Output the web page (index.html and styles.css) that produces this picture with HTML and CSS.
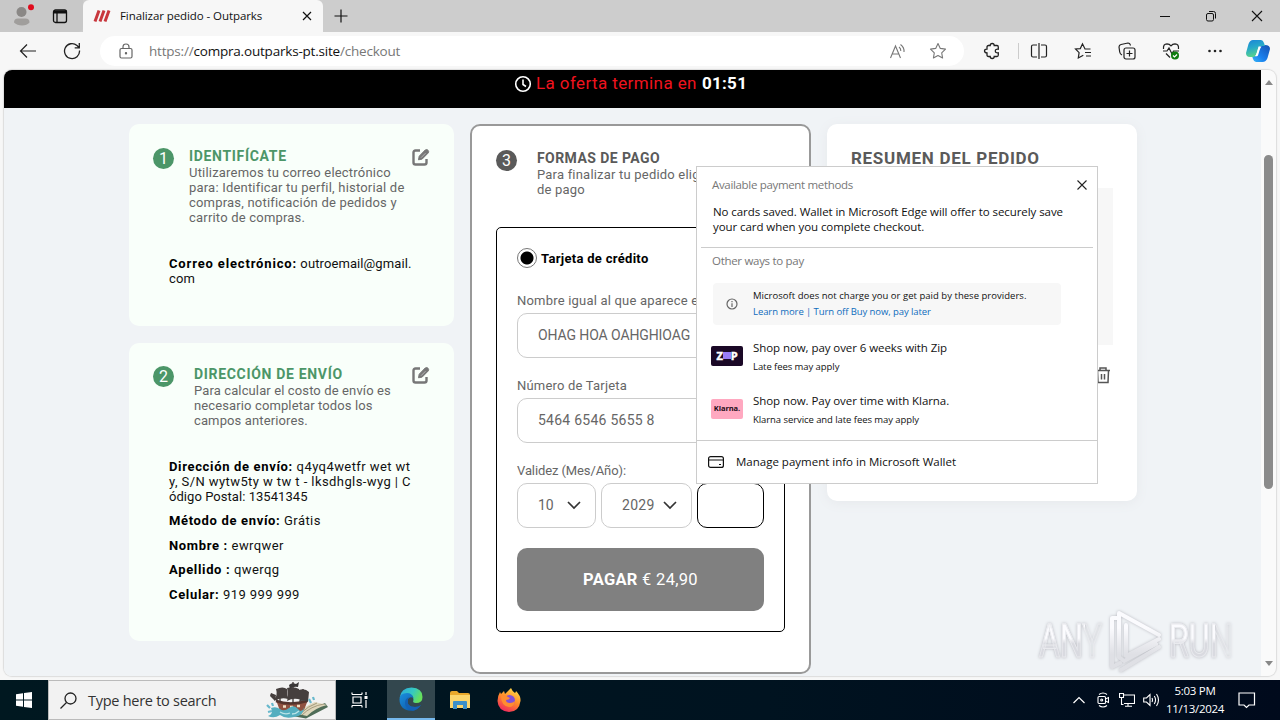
FILE: index.html
```html
<!doctype html>
<html lang="es">
<head>
    <meta charset="UTF-8">
    <title>Finalizar pedido - Outparks</title>
    <link rel="stylesheet" href="styles.css">
</head>
<body>
<div class="titlebar">
    <div class="title-left">
        <svg class="profile" width="22" height="22" viewBox="0 0 22 22">
            <circle cx="8.500" cy="8" r="5" fill="#8a8886"/>
            <path d="M1 18.500q0-4 4-4h7.500q4 0 4 4q-2.500 3-7.500 3t-8-3z" fill="#a09e9c"/>
            <circle cx="18" cy="3.200" r="3" fill="#e00b1c"/>
        </svg>
        <svg width="16" height="16" viewBox="0 0 16 16" fill="none" stroke="#111" stroke-width="1.300">
            <rect x="1.500" y="2" width="13" height="12.500" rx="2"/>
            <path d="M1.500 4h13" stroke-width="3"/><path d="M5 4v10"/>
        </svg>
    </div>
    <div class="tab">
        <svg width="18" height="14" viewBox="0 0 18 14" stroke="#c8373d" stroke-width="3"><path d="M2 12.500L6 1.500M7 12.500L11 1.500M12 12.500L16 1.500"/></svg>
        <span class="tab-title">Finalizar pedido - Outparks</span>
        <svg class="tab-close" width="10" height="10" viewBox="0 0 10 10" stroke="#111" stroke-width="1.200"><path d="M1 1l8 8M9 1l-8 8"/></svg>
    </div>
    <svg class="plus" width="14" height="14" viewBox="0 0 14 14" stroke="#111" stroke-width="1.200"><path d="M7 .5v13M.5 7h13"/></svg>
    <div class="win-btns">
        <svg width="12" height="12" viewBox="0 0 12 12" stroke="#111"><path d="M1 6.500h10"/></svg>
        <svg width="12" height="12" viewBox="0 0 12 12" fill="none" stroke="#111"><rect x="1.500" y="3.500" width="7" height="7.500" rx="1.500"/><path d="M4 1.500h4.500q2 0 2 2v5"/></svg>
        <svg width="12" height="12" viewBox="0 0 12 12" stroke="#111" stroke-width="1.100"><path d="M1 1l10 10M11 1L1 11"/></svg>
    </div>
</div>

<div class="toolbar">
    <svg width="18" height="16" viewBox="0 0 18 16" fill="none" stroke="#222" stroke-width="1.200"><path d="M17 8H1.500M8 1.500L1.500 8L8 14.500"/></svg>
    <svg class="reload" width="18" height="18" viewBox="0 0 18 18" fill="none" stroke="#222" stroke-width="1.300"><path d="M16.500 8.500a7.500 7.500 0 1 1-2.500-5l2 2M16.300 1v4.800h-4.600"/></svg>
    <div class="address">
        <svg width="14" height="16" viewBox="0 0 14 16" fill="none" stroke="#666" stroke-width="1.200"><rect x="1" y="5.500" width="12" height="9.500" rx="1.500"/><path d="M4 5.500V4q0-3 3-3t3 3v1.500"/><circle cx="7" cy="10.200" r=".6" fill="#666"/></svg>
        <span class="url">https://<b>compra.outparks-pt.site</b>/checkout</span>
        <svg class="read" width="18" height="16" viewBox="0 0 18 16" fill="none" stroke="#777" stroke-width="1.100"><path d="M1.500 15L6.500 3L11.500 15M3.200 11h6.600M10 4q2 1.500 1.800 4M11.500 1.500q4 3 3.500 7.500"/></svg>
        <svg width="18" height="18" viewBox="0 0 18 18" fill="none" stroke="#777" stroke-width="1.100" stroke-linejoin="round"><path d="M9 1.500l2.300 4.900 5.200.7-3.800 3.700.9 5.200L9 13.500 4.400 16l.9-5.200L1.500 7.100l5.200-.7z"/></svg>
    </div>
    <div class="tools">
        <svg width="18" height="18" viewBox="0 0 18 18" fill="none" stroke="#222" stroke-width="1.300"><path d="M5 3.500h2.200q0-2 2-2t2 2H14q1.300 0 1.300 1.500v2.200q-3-.3-3 1.800t3 1.800V13q0 1.500-1.300 1.500h-2.800q0 2-2 2t-2-2H5.500Q4 14.500 4 13v-2.200q-2.500 0-2.500-1.800T4 7.200V5q0-1.500 1.500-1.500"/></svg>
        <i class="sep"></i>
        <svg width="18" height="18" viewBox="0 0 18 18" fill="none" stroke="#222" stroke-width="1.200"><path d="M7 3H3q-1.500 0-1.500 1.500v9Q1.500 15 3 15h4M11 3h4q1.500 0 1.500 1.500v9q0 1.500-1.500 1.500h-4M9 1v16"/></svg>
        <svg width="18" height="18" viewBox="0 0 18 18" fill="none" stroke="#222" stroke-width="1.200"><path d="M16.500 7H11L8.500 1.800 6.300 6.600 1.500 7l3.600 3.700L4.300 16l5-2.800M11 10.500h6M12 14h5"/></svg>
        <svg width="18" height="18" viewBox="0 0 18 18" fill="none" stroke="#222" stroke-width="1.200"><rect x="6" y="6" width="11" height="11" rx="2"/><path d="M11.500 8.500v6M8.500 11.500h6M4 13Q2 12 1.700 10L1 5Q1 3 3 2.500L10 1q2 0 2.500 2.500"/></svg>
        <svg width="18" height="18" viewBox="0 0 18 18" fill="none" stroke="#222" stroke-width="1.200"><path d="M1.500 7Q1 2 5 1.800q2.500 0 4 2 1.500-2 4-2 4 .2 3.500 5.200M1 9h4l2-3 3 6 1.500-3H17M4 11.500l4 4"/><circle cx="13" cy="13.500" r="4" fill="#107c10" stroke="none"/><path d="M11 13.500l1.500 1.500 2.500-2.500" stroke="#fff"/></svg>
        <svg width="18" height="18" viewBox="0 0 18 18" fill="#222"><circle cx="3.500" cy="9" r="1.300"/><circle cx="9" cy="9" r="1.300"/><circle cx="14.500" cy="9" r="1.300"/></svg>
    </div>
    <svg class="copilot" width="24" height="24" viewBox="0 0 24 24">
        <defs>
            <linearGradient id="cp1" x1="0" y1="0" x2="0.300" y2="1"><stop offset="0" stop-color="#1a83d8"/><stop offset=".5" stop-color="#27a9c9"/><stop offset="1" stop-color="#58d38c"/></linearGradient>
            <linearGradient id="cp2" x1="1" y1="0" x2="0" y2="1"><stop offset="0" stop-color="#1650b0"/><stop offset=".6" stop-color="#1a80ee"/><stop offset="1" stop-color="#39b7f5"/></linearGradient>
        </defs>
        <path d="M14 6h5q5 0 5 4l-2.500 9q-1.500 4-5 4H10q-2 0-3-3l-1-3h5z" fill="url(#cp2)"/>
        <path d="M7 1h8q2 0 3 3l1 3h-4q-2 0-3 3l-2 6q-1 2-3 2H4q-4 0-4-4l2.500-9Q4 1 7 1z" fill="url(#cp1)"/>
        <path d="M12.500 7.500h3q-1 1-2 4l-1.200 4q-.5 1.500-1.300 1.800H9q1-1 2-4z" fill="#fff"/>
    </svg>
</div>

<div class="view">
    <div class="page">
        <div class="banner">
            <svg width="18" height="18" viewBox="0 0 18 18" fill="none" stroke="#fff" stroke-width="1.600"><circle cx="9" cy="9" r="7.300"/><path d="M9 4.500v5l3 2"/></svg>
            <span class="offer">La oferta termina en</span>
            <span class="timer">01:51</span>
        </div>
        <div class="columns">
            <div class="col-left">
                <div class="card done identify">
                    <div class="head">
                        <span class="step">1</span>
                        <div class="head-text">
                            <h2>IDENTIFÍCATE</h2>
                            <p>Utilizaremos tu correo electrónico<br>para: Identificar tu perfil, historial de<br>compras, notificación de pedidos y<br>carrito de compras.</p>
                        </div>
                        <svg class="edit" width="18" height="18" viewBox="0 0 18 18" fill="none" stroke="#777" stroke-width="2.400"><path d="M8 2.500H3.500q-2 0-2 2v10q0 2 2 2h9q2 0 2-2V11"/><path d="M6.500 11.800l.7-3.600 6-6.200q1.600-1 2.800.2t.2 2.800l-6 6.100z" fill="#777" stroke-width="1"/><path d="M9 9.700l4.500-4.500" stroke="#ccc" stroke-width=".7"/></svg>
                    </div>
                    <div class="data">
                        <p class="email"><b>Correo electrónico:</b> outroemail@gmail.<br>com</p>
                    </div>
                </div>
                <div class="card done shipping">
                    <div class="head">
                        <span class="step">2</span>
                        <div class="head-text">
                            <h2>DIRECCIÓN DE ENVÍO</h2>
                            <p>Para calcular el costo de envío es<br>necesario completar todos los<br>campos anteriores.</p>
                        </div>
                        <svg class="edit" width="18" height="18" viewBox="0 0 18 18" fill="none" stroke="#777" stroke-width="2.400"><path d="M8 2.500H3.500q-2 0-2 2v10q0 2 2 2h9q2 0 2-2V11"/><path d="M6.500 11.800l.7-3.600 6-6.200q1.600-1 2.800.2t.2 2.800l-6 6.100z" fill="#777" stroke-width="1"/><path d="M9 9.700l4.500-4.500" stroke="#ccc" stroke-width=".7"/></svg>
                    </div>
                    <div class="data">
                        <p><b>Dirección de envío:</b> q4yq4wetfr wet wt<br>y, S/N wytw5ty w tw t - lksdhgls-wyg | C<br><span class="postal">ódigo Postal: 13541345</span></p>
                        <p><b>Método de envío:</b> Grátis</p>
                        <p><b>Nombre :</b> ewrqwer</p>
                        <p><b>Apellido :</b> qwerqg</p>
                        <p><b>Celular:</b> 919 999 999</p>
                    </div>
                </div>
            </div>

            <div class="card payment">
                <div class="head">
                    <span class="step">3</span>
                    <div class="head-text">
                        <h2>FORMAS DE PAGO</h2>
                        <p>Para finalizar tu pedido elig<br>de pago</p>
                    </div>
                </div>
                <div class="method">
                    <div class="radio"><i></i><b>Tarjeta de crédito</b></div>
                    <label>Nombre igual al que aparece e</label>
                    <div class="input name">OHAG HOA OAHGHIOAG</div>
                    <label>Número de Tarjeta</label>
                    <div class="input number">5464 6546 5655 8</div>
                    <label class="expiry">Validez (Mes/Año):</label>
                    <div class="selects">
                        <div class="input month">10<svg width="14" height="9" viewBox="0 0 14 9" fill="none" stroke="#333" stroke-width="1.700"><path d="M1 1l6 6 6-6"/></svg></div>
                        <div class="input year">2029<svg width="14" height="9" viewBox="0 0 14 9" fill="none" stroke="#333" stroke-width="1.700"><path d="M1 1l6 6 6-6"/></svg></div>
                        <div class="input cvv"></div>
                    </div>
                    <div class="pay"><b>PAGAR</b>&nbsp;€ 24,90</div>
                </div>
            </div>

            <div class="card summary">
                <h2>RESUMEN DEL PEDIDO</h2>
                <div class="product"></div>
                <svg class="trash" width="14" height="18" viewBox="0 0 14 18" fill="none" stroke="#555" stroke-width="1.500"><path d="M0 4.500h14M4 4V2h6v2M1.500 5l.5 11.500h10L12.500 5M5.500 8v5.500M8.500 8v5.500"/></svg>
            </div>
        </div>
    </div>
    <div class="scroll">
        <i class="up"></i>
        <i class="thumb"></i>
        <i class="down"></i>
    </div>
</div>

<div class="taskbar">
    <div class="start"><svg width="16" height="16" viewBox="0 0 16 16" fill="#fff"><path d="M0 2.200L7 1.200V7.500H0zM8 1L16 0V7.500H8zM0 8.500H7V14.800L0 13.800zM8 8.500h8V16L8 15z"/></svg></div>
    <div class="search">
        <svg width="17" height="17" viewBox="0 0 17 17" fill="none" stroke="#222" stroke-width="1.300"><circle cx="10.500" cy="6.500" r="5.500"/><path d="M6.500 10.500L.5 16.500"/></svg>
        <span>Type here to search</span>
        <svg class="ship" width="64" height="38" viewBox="0 0 64 38">
            <path d="M26 35l14 2.500L62 26l-3-4-18 9z" fill="#4f6d58"/>
            <path d="M32 33q8-9 17-12l12 3q-12 3-20 11z" fill="#ded6bb"/>
            <path d="M36 34q9-9 22-11M34 33q8-8 17-11" stroke="#a59a7c" fill="none"/>
            <path d="M10 19l4 11q12 4 24-1l4-10-8 2-14 1z" fill="#8f5140"/>
            <path d="M10 20q14 5 31 0" stroke="#54332c" stroke-width="2.500" fill="none"/>
            <path d="M17 25.500h3M24 26h3M31 25h3" stroke="#f1dfc4" stroke-width="2.500"/>
            <path d="M14 21V7M27 22V1M37 20V8M12 20L5 13" stroke="#3d3433" stroke-width="1.300"/>
            <path d="M10 8q7-3 11 0l1 10q-7-2-14 2 4-6 2-12zM21 7q7-2 12 1l2 11q-7-3-14 1 2-6 0-13zM33 9q6-2 10 2l-1 10q-5-3-9 0 2-6 0-12zM5 12l5 2-1 6-5-5z" fill="#453f3e"/>
            <path d="M23 4q3-3 7-1l3-2-1 5q-5-1-8 2z" fill="#3a3737"/>
            <path d="M5 27q5-2 9 1t9-1 9 1 6-2q0 9-10 10-9 2-14-2-6 4-12 1 6-2 3-8z" fill="#54aebf"/>
            <path d="M14 31q5 3 10 1M26 33q4 0 7-3" stroke="#b9e3e6" stroke-width="1.300" fill="none"/>
            <path d="M1 24l3 3M6 22l1 3M43 18l2 4M47 16l1 3M2 31l4-1" stroke="#67b8cc" stroke-width="2.200"/>
        </svg>
    </div>
    <div class="task"><svg width="18" height="16" viewBox="0 0 18 16" fill="none" stroke="#fff" stroke-width="1.200"><path d="M1 2.500V.5M11 2.500V.5M1 2.500h10M1 13.500h10M1 13.500v2M11 13.500v2M2 5h8v6h-8zM15 0v3M15 8v8"/><path d="M13.500 5.500h3" stroke-width="3"/></svg></div>
    <div class="task active">
        <svg width="24" height="24" viewBox="0 0 24 24">
            <defs>
                <linearGradient id="eg1" x1="0" y1="0" x2="1" y2=".4"><stop offset="0" stop-color="#2aa6e0"/><stop offset=".6" stop-color="#36c9c0"/><stop offset="1" stop-color="#66e05c"/></linearGradient>
                <linearGradient id="eg2" x1="0" y1="0" x2="1" y2="1"><stop offset="0" stop-color="#1a8fdf"/><stop offset="1" stop-color="#0b4f9c"/></linearGradient>
            </defs>
            <path d="M.5 11Q2 .5 12.500.5 23.500 1 23.500 10q0 6-6.500 6-4 0-2.500-3 0-6-6-6T.5 11z" fill="url(#eg1)"/>
            <path d="M.5 12Q1 6 8 6q5 0 6.500 5Q11 9 9 12q-2 8 7 8 4 0 6-2-4 6-10 5.800Q.5 23 .5 12z" fill="url(#eg2)"/>
            <path d="M9 12q-2 8 7 8 4 0 6-2-3 4.500-8 5.700Q6 22 6 16q0-5 5-6-2 1-2 2z" fill="#1460b4"/>
        </svg>
    </div>
    <div class="task"><svg width="22" height="20" viewBox="0 0 22 20"><path d="M1 3q0-2 2-2h5l2 2h9q2 0 2 2v13H1z" fill="#e9a82b"/><path d="M1 5h20v13H1z" fill="#fbd56c"/><path d="M4 19v-7q0-1 1-1h12q1 0 1 1v7h-4v-4H8v4z" fill="#3b8fc8"/></svg></div>
    <div class="task"><svg width="24" height="24" viewBox="0 0 24 24">
        <defs><linearGradient id="ff" x1=".8" y1="0" x2=".3" y2="1"><stop offset="0" stop-color="#ffe14a"/><stop offset=".5" stop-color="#ff8a2a"/><stop offset="1" stop-color="#f0265f"/></linearGradient></defs>
        <path d="M14 0q1 3 4 5 1-1 1-2 5 5 4.500 10Q22 24 12 24 1 23 .5 13 .5 8 3 4l1 2 3-3 1 3q3-3 6-6z" fill="url(#ff)"/>
        <circle cx="12.500" cy="12.500" r="5.500" fill="#8150d8"/>
        <path d="M4 8q4-2 7 1l2 1q-1 2-4 2 0 3 4 3 3 0 5-2-1 6-6 6-8-1-8-11z" fill="#ff8d30"/>
    </svg></div>
    <div class="tray">
        <svg width="12" height="8" viewBox="0 0 12 8" fill="none" stroke="#fff" stroke-width="1.200"><path d="M.5 7L6 1.500 11.500 7"/></svg>
        <svg width="12" height="16" viewBox="0 0 12 16" fill="none" stroke="#fff" stroke-width="1.100"><path d="M2 2.500q4-3 8 0M2 13.500q4 3 8 0M8.500 7l3-1.500v5L8.500 9"/><rect x="1" y="4.500" width="7.500" height="7" rx="1"/><circle cx="4.700" cy="8" r="1"/></svg>
        <svg width="16" height="14" viewBox="0 0 16 14" fill="none" stroke="#fff" stroke-width="1.100"><path d="M5 2h10.500v8.500H5M9 10.500V13M6 13.300h7M.5.5h4v4h-4zM2.500 4.500v7h2"/></svg>
        <svg width="17" height="14" viewBox="0 0 17 14" fill="none" stroke="#fff" stroke-width="1.100"><path d="M.7 5h2.800L7 1.500v11L3.500 9H.7zM9 5q1 2 0 4M11.300 3q2.500 4 0 8M13.500 1q4 6 0 12"/></svg>
    </div>
    <div class="clock">5:03 PM<br>11/13/2024</div>
    <svg class="notice" width="18" height="17" viewBox="0 0 18 17" fill="none" stroke="#fff" stroke-width="1.200"><path d="M1 1h15.500v12H11l-2.500 2.500L6 13H1z"/></svg>
</div>

<div class="wallet">
    <div class="wallet-head">
        <span>Available payment methods</span>
        <svg width="10" height="10" viewBox="0 0 10 10" stroke="#222" stroke-width="1.100"><path d="M.5.5l9 9M9.500.5l-9 9"/></svg>
    </div>
    <p class="wallet-msg">No cards saved. Wallet in Microsoft Edge will offer to securely save<br>your card when you complete checkout.</p>
    <div class="other">Other ways to pay</div>
    <div class="info">
        <svg width="12" height="12" viewBox="0 0 12 12" fill="none" stroke="#666" stroke-width="1.200"><circle cx="6" cy="6" r="5"/><path d="M6 5.200V9M6 3v1.200"/></svg>
        <p>Microsoft does not charge you or get paid by these providers.<br><a>Learn more | Turn off Buy now, pay later</a></p>
    </div>
    <div class="option">
        <div class="logo zip"><b>Z</b><i></i><b>P</b></div>
        <div><p>Shop now, pay over 6 weeks with Zip</p><small>Late fees may apply</small></div>
    </div>
    <div class="option">
        <div class="logo klarna">Klarna.</div>
        <div><p>Shop now. Pay over time with Klarna.</p><small>Klarna service and late fees may apply</small></div>
    </div>
    <div class="manage">
        <svg width="16" height="12" viewBox="0 0 16 12" fill="none" stroke="#111" stroke-width="1.200"><rect x=".6" y=".6" width="14.800" height="10.800" rx="2"/><path d="M.6 4h14.800M11 8.500h2"/></svg>
        <span>Manage payment info in Microsoft Wallet</span>
    </div>
</div>

<div class="watermark">
    <span>ANY</span>
    <svg width="60" height="66" viewBox="0 0 60 66" fill="none" stroke-linejoin="round" stroke-linecap="round">
        <defs><linearGradient id="wm" x1="0" y1="0" x2="0" y2="66" gradientUnits="userSpaceOnUse"><stop offset=".3" stop-color="#fbfbfe"/><stop offset=".7" stop-color="#dfe0e5"/></linearGradient></defs>
        <path d="M10 10H5v49l8-4M12 49V5l40 22M19 17v31l33-17M12 49l5 4 32-17M14 62l38-23" stroke="url(#wm)" stroke-width="4"/>
    </svg>
    <span>RUN</span>
</div>
</body>
</html>
```

FILE: styles.css
```css
*{
    margin: 0;
    padding: 0;
    box-sizing: border-box;
}
body{
    width: 1280px;
    height: 720px;
    overflow: hidden;
    background-color: #f7f7f7;
    font-family: "Open Sans", "Noto Sans", sans-serif;
}
svg{
    display: block;
    flex: none;
}

/* browser chrome */
.titlebar{
    height: 32px;
    background-color: #cdcdcd;
    display: flex;
    align-items: center;
}
.title-left{
    width: 83px;
    height: 32px;
    padding-left: 13px;
    display: flex;
    align-items: center;
    gap: 17px;
    background-color: #c8c8c8;
    border-radius: 0 0 5px 0;
}
.profile{
    margin-top: -2px;
}
.tab{
    width: 240px;
    height: 32px;
    padding: 0 11px 0 10px;
    display: flex;
    align-items: center;
    background-color: #f7f7f7;
    border-radius: 6px 6px 0 0;
}
.tab-title{
    margin: -2px 0 0 9px;
    font-size: 11.5px;
    letter-spacing: -.08px;
    white-space: nowrap;
    color: #111;
}
.tab-close{
    margin-left: auto;
}
.plus{
    margin-left: 11px;
}
.win-btns{
    margin-left: auto;
    margin-right: 17px;
    display: flex;
    gap: 34px;
}
.toolbar{
    height: 38px;
    padding: 0 10px 0 19px;
    display: flex;
    align-items: center;
    background-color: #f7f7f7;
}
.reload{
    margin-left: 26px;
}
.address{
    width: 864px;
    height: 30px;
    margin-left: 19px;
    padding: 0 17px 0 19px;
    display: flex;
    align-items: center;
    background-color: #fff;
    border-radius: 15px;
}
.url{
    margin-left: 16px;
    font-size: 13.5px;
    letter-spacing: -.2px;
    color: #777;
}
.url b{
    font-weight: normal;
    color: #111;
}
.read{
    margin-left: auto;
    margin-right: 22px;
}
.tools{
    margin-left: 19px;
    display: flex;
    align-items: center;
    gap: 26px;
}
.sep{
    width: 1px;
    height: 16px;
    margin: 0 -15px 0 -9px;
    background-color: #ccc;
}
.copilot{
    margin-left: auto;
}
.view{
    width: 1272px;
    height: 606px;
    margin-left: 4px;
    display: flex;
    overflow: hidden;
    border-radius: 8px;
    background-color: #fafafa;
    box-shadow: 0 0 1px 1px #dcdcdc;
}

/* checkout */
.page{
    width: 1257px;
    background-color: #f0f3f6;
    font-family: Roboto, "Liberation Sans", sans-serif;
    font-size: 13px;
    line-height: 15px;
    color: #666;
    white-space: nowrap;
}
.banner{
    height: 38px;
    padding: 0 0 11px 510px;
    display: flex;
    align-items: center;
    background-color: #000;
    font-size: 17px;
}
.offer{
    margin: 0 5px 0 4px;
    color: #f0131e;
    letter-spacing: .4px;
}
.timer{
    color: #fff;
    font-weight: bold;
    letter-spacing: .3px;
}
.columns{
    padding: 16px 0 0 125px;
    display: flex;
    align-items: flex-start;
    gap: 16px;
}
.col-left{
    width: 325px;
    display: flex;
    flex-direction: column;
    gap: 17px;
}
.card{
    background-color: #fff;
    border-radius: 10px;
}
.done{
    padding: 24px;
    background-color: #f9fffa;
}
.identify{
    height: 202px;
}
.shipping{
    height: 298px;
    padding-top: 23px;
}
.head{
    display: flex;
    gap: 20px;
}
.identify .head{
    gap: 15px;
}
.step{
    width: 21px;
    height: 21px;
    flex: none;
    border-radius: 50%;
    background-color: #5a5a5a;
    color: #fff;
    font-size: 16px;
    line-height: 21px;
    text-align: center;
}
.done .step{
    background-color: #4c9668;
}
.head-text{
    width: 180px;
    letter-spacing: .2px;
}
.shipping .head-text{
    letter-spacing: .12px;
}
h2{
    font-size: 14px;
    line-height: 17px;
    letter-spacing: .43px;
    color: #5a5a5a;
}
.done h2{
    color: #4c9668;
    letter-spacing: .68px;
}
.edit{
    margin-left: auto;
}
.data{
    margin: 31px 0 0 16px;
    color: #111;
    letter-spacing: .42px;
}
.data p{
    margin-bottom: 9.4px;
}
.data b{
    color: #000;
    font-weight: 700;
    letter-spacing: .66px;
}
.data .email{
    letter-spacing: .1px;
}
.email b{
    letter-spacing: .85px;
}
.postal{
    letter-spacing: .05px;
}
.payment{
    width: 341px;
    height: 550px;
    padding: 24px;
    border: 2px solid #999;
}
.method{
    height: 405px;
    margin-top: 30px;
    padding: 20px;
    border: 1px solid #000;
    border-radius: 5px;
}
.radio{
    height: 20px;
    margin-bottom: 25px;
    display: flex;
    align-items: center;
    gap: 4px;
    color: #000;
    letter-spacing: .3px;
}
.radio i{
    width: 20px;
    height: 20px;
    border-radius: 50%;
    border: 1px solid #777;
    background: radial-gradient(circle, #000 6px, #fff 7px);
}
label{
    display: block;
    height: 20px;
    line-height: 16px;
    letter-spacing: .2px;
}
.expiry{
    letter-spacing: -.1px;
}
.input{
    height: 45px;
    margin-bottom: 20px;
    padding: 0 20px;
    display: flex;
    align-items: center;
    border: 1px solid #ccc;
    border-radius: 10px;
    font-size: 14px;
}
.name{
    letter-spacing: -.1px;
}
.number{
    letter-spacing: .25px;
}
.selects{
    display: flex;
    gap: 5px;
}
.selects svg{
    margin-left: auto;
}
.month{
    width: 79px;
    padding-right: 14px;
}
.year{
    width: 91px;
    padding-right: 14px;
    letter-spacing: .3px;
}
.cvv{
    width: 67px;
    border-color: #000;
}
.pay{
    height: 63px;
    display: flex;
    align-items: center;
    justify-content: center;
    border-radius: 10px;
    background-color: #808080;
    color: #fff;
    font-size: 16.5px;
    letter-spacing: .3px;
}
.summary{
    width: 310px;
    height: 377px;
    padding: 24px;
    box-shadow: 0 2px 12px #e6e9ec;
}
.summary h2{
    font-size: 17px;
    line-height: 20px;
    letter-spacing: .7px;
}
.product{
    height: 157px;
    margin-top: 20px;
    background-color: #f7f7f7;
}
.trash{
    margin: 21px 3px 0 auto;
}
.scroll{
    width: 15px;
    padding: 10px 0 10px;
    display: flex;
    flex-direction: column;
    align-items: center;
}
.up{
    border: 4px solid transparent;
    border-top: none;
    border-bottom: 5px solid #888;
}
.thumb{
    width: 9px;
    height: 334px;
    margin-top: 70px;
    border-radius: 5px;
    background-color: #8b8b8b;
}
.down{
    margin-top: auto;
    border: 4px solid transparent;
    border-bottom: none;
    border-top: 5px solid #888;
}

/* windows taskbar */
.taskbar{
    height: 40px;
    margin-top: 4px;
    display: flex;
    align-items: center;
    background: linear-gradient(90deg, #001820, #001320 60%, #000a1c);
    color: #fff;
}
.start{
    width: 48px;
    display: flex;
    justify-content: center;
}
.search{
    width: 288px;
    height: 40px;
    padding: 0 5px 0 11px;
    display: flex;
    align-items: center;
    background-color: #f2f2f2;
    border: 1px solid #bbb;
    color: #333;
    font-size: 14.5px;
    letter-spacing: -.27px;
}
.search span{
    margin-left: 11px;
    white-space: nowrap;
}
.ship{
    margin-left: auto;
}
.task{
    width: 48px;
    height: 40px;
    margin-right: 1px;
    display: flex;
    align-items: center;
    justify-content: center;
}
.active{
    margin-left: 2px;
    background-color: #33474e;
    border-bottom: 2px solid #76b9ed;
}
.tray{
    margin-left: auto;
    display: grid;
    grid-template-columns: repeat(4, 24px);
    place-items: center;
}
.clock{
    width: 58px;
    margin-left: 3px;
    font-size: 11.5px;
    line-height: 18px;
    letter-spacing: -.3px;
    text-align: center;
    white-space: nowrap;
}
.notice{
    margin: 0 24px 0 14px;
}

/* wallet popup over the form */
.wallet{
    position: absolute;
    left: 696px;
    top: 166px;
    width: 402px;
    height: 318px;
    background-color: #fff;
    border: 1px solid #ccc;
    font-size: 11.5px;
    line-height: 15px;
    letter-spacing: -.07px;
    color: #111;
    white-space: nowrap;
}
.wallet-head{
    height: 36px;
    padding: 0 10px 0 15px;
    display: flex;
    align-items: center;
    justify-content: space-between;
    letter-spacing: -.33px;
    color: #777;
}
.wallet-head span{
    margin-top: -1px;
}
.wallet-msg{
    height: 45px;
    margin: 0 4px;
    padding: 1px 0 0 12px;
    border-bottom: 1px solid #ccc;
}
.other{
    padding-left: 15px;
    line-height: 26px;
    letter-spacing: -.3px;
    color: #777;
}
.info{
    width: 348px;
    height: 42px;
    margin: 9px 0 5px 16px;
    padding-left: 13px;
    display: flex;
    align-items: center;
    gap: 15px;
    background-color: #f7f7f7;
    border-radius: 4px;
    font-size: 9.5px;
    line-height: 16px;
    letter-spacing: .03px;
}
.info a{
    color: #0f6cbd;
    letter-spacing: -.08px;
}
.option{
    height: 53px;
    padding-left: 14px;
    display: flex;
    align-items: center;
    gap: 10px;
}
.option p{
    line-height: 19px;
}
.option small{
    display: block;
    font-size: 9.5px;
    line-height: 19px;
}
.logo{
    width: 32px;
    height: 20px;
    margin-bottom: 2px;
    display: flex;
    align-items: center;
    justify-content: center;
    border-radius: 2px;
}
.zip{
    background-color: #1a0826;
    color: #fff;
    font-size: 11px;
    -webkit-text-stroke: .5px #fff;
}
.zip i{
    width: 8px;
    height: 7px;
    background-color: #9a7cf5;
}
.klarna{
    background-color: #ffa8c0;
    color: #1d0b16;
    font-weight: 700;
    font-size: 7.5px;
}
.manage{
    height: 43px;
    margin-top: 4px;
    padding: 0 0 1px 11px;
    display: flex;
    align-items: center;
    gap: 12px;
    letter-spacing: 0;
    border-top: 1px solid #ccc;
}

.watermark{
    position: absolute;
    left: 1039px;
    top: 608px;
    width: 196px;
    height: 66px;
    display: flex;
    align-items: center;
    justify-content: space-between;
    font: 46px Roboto, sans-serif;
    filter: drop-shadow(0 0 1.5px #b8b9c0);
}
.watermark span{
    width: 66px;
    color: transparent;
    background: linear-gradient(#fbfbfe 45%, #d9dae0 55%);
    -webkit-background-clip: text;
    background-clip: text;
    -webkit-text-stroke: 1px #e9eaee;
    transform: scaleX(.7);
    transform-origin: left;
}
```
